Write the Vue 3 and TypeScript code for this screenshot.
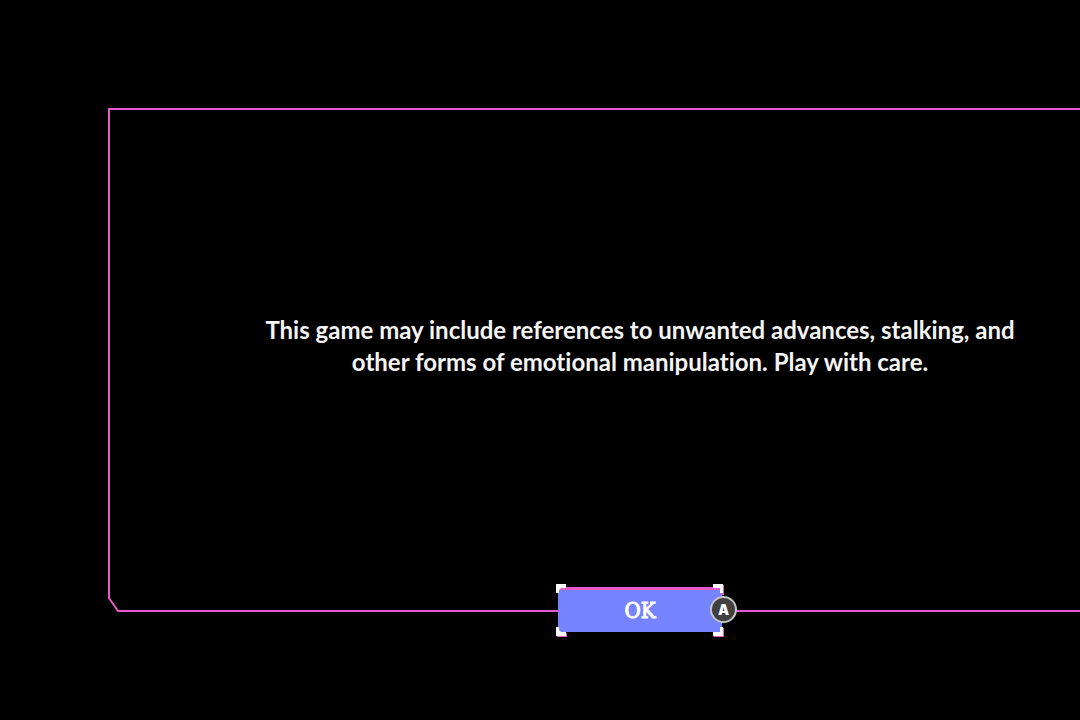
<script setup lang="ts">
import { ref } from 'vue'

const open = ref<boolean>(true)
const message: string =
  'This game may include references to unwanted advances, stalking, and other forms of emotional manipulation. Play with care.'

function accept(): void {
  open.value = false
}
</script>

<template>
  <main class="screen">
    <section v-if="open" class="dialog" role="alertdialog" aria-labelledby="warning">
      <svg class="cut" viewBox="0 0 12 16" aria-hidden="true">
        <rect width="12" height="16" fill="#000" />
        <path d="M1 0V2L10 15H12" fill="none" stroke="#e65acb" stroke-width="2" />
      </svg>
      <p id="warning" class="message">{{ message }}</p>
      <button class="ok" type="button" @click="accept">
        OK
        <svg class="bracket tl" viewBox="0 0 12 12" aria-hidden="true">
          <path d="M1 0H11V4H6L4 6V9H1Z" fill="#fff" />
        </svg>
        <svg class="bracket tr" viewBox="0 0 12 12" aria-hidden="true">
          <path d="M9 1H12V11H9Z" fill="#e65acb" />
          <path d="M1 0H11V9H8V4H1Z" fill="#fff" />
        </svg>
        <svg class="bracket bl" viewBox="0 0 12 12" aria-hidden="true">
          <path d="M2 8H12V12H2Z" fill="#e65acb" />
          <path d="M1 2H4V5L6 7H11V11H1Z" fill="#fff" />
        </svg>
        <svg class="bracket br" viewBox="0 0 12 12" aria-hidden="true">
          <path d="M2 8H9V3H12V12H2Z" fill="#e65acb" />
          <path d="M1 7H8V2H11V11H1Z" fill="#fff" />
        </svg>
        <span class="key" aria-hidden="true">A</span>
      </button>
    </section>
  </main>
</template>

<style>
body {
  margin: 0;
  background: #000;
}
</style>

<style scoped>
.screen {
  display: flex;
  box-sizing: border-box;
  min-height: 100vh;
  padding: 108px 0 108px 108px;
  overflow: hidden;
  background: #000;
}

.dialog {
  position: relative;
  display: flex;
  flex: 1;
  align-items: center;
  justify-content: center;
  box-sizing: border-box;
  margin-right: -92px;
  padding-bottom: 28px;
  border: 2px solid #e65acb;
}

.cut {
  position: absolute;
  left: -2px;
  bottom: -2px;
  width: 12px;
  height: 16px;
}

.message {
  max-width: 768px;
  margin: 0;
  color: #f4f4f4;
  font: 700 24px/32px Lato, sans-serif;
  font-variant-ligatures: none;
  text-align: center;
}

.ok {
  position: absolute;
  bottom: -22px;
  left: 50%;
  box-sizing: border-box;
  width: 164px;
  height: 45px;
  margin: 0 0 0 -82px;
  padding: 0;
  border: 0;
  border-top: 3px solid #e65acb;
  background: #7583ff;
  color: #fff;
  font: 400 22px/40px "DejaVu Serif Condensed", "DejaVu Serif", serif;
  -webkit-text-stroke: 1px #fff;
  cursor: pointer;
}

.bracket {
  position: absolute;
  width: 12px;
  height: 12px;
}

.tl,
.tr {
  top: -6px;
}

.bl,
.br {
  bottom: -5px;
}

.tl,
.bl {
  left: -3px;
}

.tr,
.br {
  right: -2px;
}

.key {
  position: absolute;
  top: 6px;
  right: -15px;
  box-sizing: border-box;
  width: 27px;
  height: 27px;
  border: 2px solid #c4c4c4;
  border-radius: 50%;
  background: #404040;
  font: 900 14px/23px Inter, sans-serif;
  -webkit-text-stroke: 0;
  text-align: center;
}
</style>
